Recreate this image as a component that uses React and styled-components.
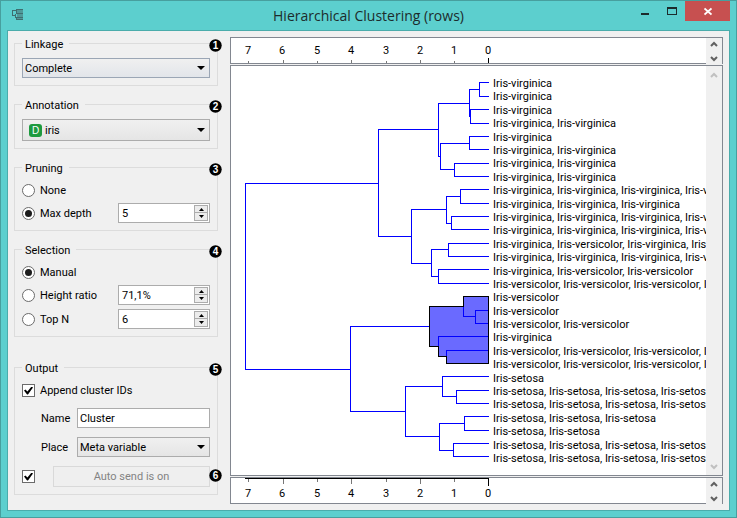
import React, { useState } from "react";
import styled, { createGlobalStyle, css } from "styled-components";

const GlobalStyle = createGlobalStyle`
  *, *::before, *::after { box-sizing: border-box; }
  body { margin: 0; background: #5ccfce; }
  body, button, input, select { font: 11px/13px Roboto, "Liberation Sans", sans-serif; color: #000; }
`;

const Window = styled.div`
  display: flex;
  flex-direction: column;
  min-height: 100vh;
  padding: 0 6px 6px;
  border: 1px solid #479f9e;
  background: #5ccfce;
`;

const TitleBar = styled.header`
  display: grid;
  grid-template-columns: 100px 1fr 100px;
  height: 29px;
`;

const AppIcon = styled.svg`
  width: 12px;
  height: 12px;
  margin: 8px 0 0 5px;
`;

const Title = styled.h1`
  margin: 0;
  color: #1c2c2c;
  font: 14px/29px "Open Sans", "Noto Sans", sans-serif;
  text-align: center;
  white-space: nowrap;
`;

const Controls = styled.div`
  display: flex;
  justify-content: flex-end;
  align-items: flex-start;
`;

const ControlButton = styled.button`
  display: flex;
  width: ${(p) => (p.$close ? 45 : 27)}px;
  height: 20px;
  padding: 0;
  border: 0;
  justify-content: center;
  background: ${(p) => (p.$close ? "#c75050" : "transparent")};
`;

const Client = styled.main`
  display: grid;
  flex: 1;
  grid-template-columns: 204px minmax(0, 1fr);
  gap: 12px;
  padding: 6px;
  border: 1px solid #4aacab;
  background: #f0f0f0;
`;

const Sidebar = styled.form`
  display: flex;
  flex-direction: column;
  gap: 12px;
`;

const GroupBox = styled.fieldset`
  min-width: 0;
  margin: 0;
  padding: 8px 7px 7px;
  border: 1px solid #dcdcdc;
`;

const GroupFrame = styled.div`
  position: relative;
  margin-top: ${(p) => (p.$spaced ? 12 : 0)}px;
`;

const Legend = styled.legend`
  height: 13px;
  padding: 0 6px 0 3px;
  line-height: 15px;
`;

const Stack = styled.div`
  display: flex;
  flex-direction: column;
  gap: ${(p) => p.$gap}px;
`;

const Row = styled.div`
  position: relative;
  display: grid;
  grid-template-columns: ${(p) => p.$columns || "1fr"};
  align-items: center;
  min-height: 17px;
`;

const Badge = styled.svg`
  position: absolute;
  right: ${(p) => (p.$inRow ? -12 : -4)}px;
  top: ${(p) => (p.$inRow ? 3 : 2)}px;
  width: 13px;
  height: 13px;
`;

const SelectFrame = styled.div`
  position: relative;
  display: flex;
  align-items: center;
`;

const Select = styled.select`
  appearance: none;
  width: 100%;
  height: ${(p) => (p.$icon ? 22 : 20)}px;
  padding: 0 20px 0 ${(p) => (p.$icon ? 22 : 2)}px;
  border: 1px solid ${(p) => (p.$focused ? "#9ba6b5" : "#acacac")};
  border-radius: 0;
  background: linear-gradient(#f0f0f0, ${(p) => (p.$focused ? "#e2e5ea" : "#e5e5e5")});
`;

const SelectArrow = styled.svg`
  position: absolute;
  right: 5px;
  width: 8px;
  height: 4px;
  pointer-events: none;
`;

const VariableIcon = styled.span`
  position: absolute;
  left: 7px;
  width: 13px;
  height: 13px;
  border-radius: 3px;
  background: #1e9a3f;
  color: #fff;
  font: 10px/13px "Liberation Sans", sans-serif;
  text-align: center;
  pointer-events: none;
`;

const Choice = styled.label`
  display: flex;
  align-items: center;
  gap: 5px;
`;

const mark = css`
  appearance: none;
  display: grid;
  place-items: center;
  flex: none;
  width: 13px;
  height: 13px;
  margin: 0;
  border: 1px solid #6b6b6b;
  background: #fff;
`;

const Radio = styled.input.attrs({ type: "radio" })`
  ${mark}
  border-radius: 50%;
  &:checked::before {
    content: "";
    width: 7px;
    height: 7px;
    border-radius: 50%;
    background: #1c1c1c;
  }
`;

const CheckBox = styled.input.attrs({ type: "checkbox" })`
  ${mark}
  &:checked::before {
    content: "";
    width: 9px;
    height: 8px;
    background: #000;
    clip-path: polygon(0 50%, 16% 38%, 38% 64%, 84% 0, 100% 12%, 44% 100%, 34% 100%);
  }
`;

const SpinFrame = styled.div`
  display: flex;
  min-width: 0;
  height: 20px;
  padding: 1px;
  border: 1px solid #acacac;
  background: #fff;
`;

const SpinInput = styled.input`
  flex: 1;
  width: 0;
  min-width: 0;
  padding: 1px 3px 0 2px;
  border: 0;
  background: transparent;
`;

const SpinButtons = styled.div`
  display: grid;
  grid-template-rows: 1fr 1fr;
  width: 14px;
`;

const SpinButton = styled.button`
  display: grid;
  place-items: center;
  padding: 0;
  border: 1px solid #acacac;
  background: #ececec;
  & + & { border-top: 0; }
`;

const TextField = styled.input`
  width: 100%;
  min-width: 0;
  height: 20px;
  padding: 1px 2px 0;
  border: 1px solid #acacac;
  background: #fff;
`;

const FieldLabel = styled.label`
  padding-left: 19px;
`;

const SendButton = styled.button`
  height: 21px;
  border: 1px solid #d9d9d9;
  background: #efefef;
  color: #838383;
`;

const Views = styled.section`
  display: grid;
  grid-template-rows: 27px minmax(0, 1fr) 27px;
  gap: 1px;
`;

const Pane = styled.div`
  display: grid;
  grid-template-columns: minmax(0, 1fr) 16px;
  border: 1px solid #828790;
  background: #fff;
`;

const Plot = styled.svg`
  display: block;
  width: 100%;
  height: 100%;
  overflow: hidden;
  shape-rendering: crispEdges;
  text { font: 11px Roboto, "Liberation Sans", sans-serif; }
`;

const ScrollBar = styled.div`
  display: flex;
  flex-direction: column;
  justify-content: space-between;
  background: #f0f0f0;
`;

const ScrollButton = styled.button`
  display: grid;
  place-items: center;
  height: ${(p) => (p.$tall ? 17 : 12)}px;
  padding: 0;
  border: 0;
  background: transparent;
  color: ${(p) => (p.$tall ? "#c0c0c0" : "#606060")};
  & + & {
    height: ${(p) => (p.$tall ? 17 : 13)}px;
    border-top: ${(p) => (p.$divided ? "1px solid #828790" : "0")};
  }
`;

function NumberBadge({ n, inRow }) {
  return (
    <Badge $inRow={inRow} viewBox="0 0 13 13" aria-hidden="true">
      <circle cx="6.5" cy="6.5" r="6.2" />
      <text x="6.5" y="10.2" fill="#fff" fontFamily="Liberation Sans, sans-serif" fontSize="10" fontWeight="700" textAnchor="middle">
        {n}
      </text>
    </Badge>
  );
}

function Group({ title, n, spaced, children }) {
  return (
    <GroupFrame $spaced={spaced}>
      <GroupBox>
        <Legend>{title}</Legend>
        {children}
      </GroupBox>
      <NumberBadge n={n} />
    </GroupFrame>
  );
}

function DropDown({ icon, options, ...rest }) {
  return (
    <SelectFrame>
      <Select $icon={!!icon} {...rest}>
        {options.map((o) => <option key={o}>{o}</option>)}
      </Select>
      {icon && <VariableIcon aria-hidden="true">{icon}</VariableIcon>}
      <SelectArrow viewBox="0 0 8 4"><path d="M0 0h8L4 4z" /></SelectArrow>
    </SelectFrame>
  );
}

function Spin({ label, initial }) {
  const [value, setValue] = useState(initial);
  const step = (d) => {
    const percent = value.endsWith("%");
    const next = parseFloat(value.replace(",", ".")) + d;
    setValue(percent ? `${next.toFixed(1).replace(".", ",")}%` : String(next));
  };
  return (
    <SpinFrame>
      <SpinInput aria-label={label} value={value} onChange={(e) => setValue(e.target.value)} />
      <SpinButtons>
        <SpinButton type="button" aria-label={`Increase ${label}`} onClick={() => step(1)}>
          <svg width="5" height="3"><path d="M0 3h5L2.5 0z" /></svg>
        </SpinButton>
        <SpinButton type="button" aria-label={`Decrease ${label}`} onClick={() => step(-1)}>
          <svg width="5" height="3"><path d="M0 0h5L2.5 3z" /></svg>
        </SpinButton>
      </SpinButtons>
    </SpinFrame>
  );
}

function Scroll({ tall, divided }) {
  return (
    <ScrollBar>
      <ScrollButton type="button" aria-label="Scroll up" $tall={tall}>
        <svg width="8" height="6"><path d="M1 5l3-3 3 3" fill="none" stroke="currentColor" strokeWidth="2" /></svg>
      </ScrollButton>
      <ScrollButton type="button" aria-label="Scroll down" $tall={tall} $divided={divided}>
        <svg width="8" height="6"><path d="M1 1l3 3 3-3" fill="none" stroke="currentColor" strokeWidth="2" /></svg>
      </ScrollButton>
    </ScrollBar>
  );
}

const ticks = [[7, 17], [6, 52], [5, 86], [4, 120], [3, 155], [2, 189], [1, 223], [0, 257]];

function Axis({ bottom }) {
  return (
    <Pane>
      <Plot role="img" aria-label="Height scale">
        {bottom && <path d="M14 .5H258" stroke="#000" />}
        {ticks.map(([n, x]) => (
          <g key={n}>
            <path
              d={bottom ? `M${x + 0.5} 1v${n === 0 ? 7 : n % 2 ? 3 : 5}` : `M${x + 0.5} 25v${n === 0 ? -5 : n % 2 ? -2 : -3}`}
              stroke={n === 0 ? "#000" : "#777"}
            />
            <text x={n === 6 ? x - 1 : x} y={bottom ? 19 : 16} textAnchor="middle">{n}</text>
          </g>
        ))}
      </Plot>
      <Scroll divided={!bottom} />
    </Pane>
  );
}

const vi = "Iris-virginica";
const ve = "Iris-versicolor";
const se = "Iris-setosa";

const leaves = [
  [vi], [vi], [vi], [vi, vi], [vi], [vi, vi], [vi, vi], [vi, vi],
  [vi, vi, vi, vi], [vi, vi, vi], [vi, vi, vi, vi], [vi, vi, vi, vi],
  [vi, ve, vi, vi], [vi, vi, vi, vi], [vi, ve, ve], [ve, ve, ve, ve],
  [ve], [ve], [ve, ve], [vi], [ve, ve, ve, ve], [ve, ve, ve, ve],
  [se], [se, se, se, se], [se, se, se, se], [se, se, se], [se, se],
  [se, se, se, se], [se, se, se, se],
];

const firstBaseline = 21;
const leafPitch = 375 / 28;

// Each merge: height position, first child (x, y), second child (x, y).
const merges = [
  [248, 257, 16, 257, 30], [239, 257, 43, 257, 57], [238, 248, 23, 239, 50],
  [238, 257, 70, 257, 83], [223, 257, 97, 257, 110], [209, 238, 77, 223, 103],
  [207, 238, 37, 209, 90], [229, 257, 123, 257, 137], [220, 257, 150, 257, 163],
  [215, 229, 130, 220, 157], [217, 257, 177, 257, 190], [207, 257, 203, 257, 217],
  [200, 217, 183, 207, 210], [180, 215, 143, 200, 197], [147, 207, 63, 180, 170],
  [244, 257, 244, 257, 257], [232, 257, 230, 244, 250], [215, 257, 284, 257, 297],
  [207, 257, 270, 215, 290], [198, 232, 240, 207, 280], [225, 257, 324, 257, 337],
  [211, 257, 310, 225, 330], [233, 257, 350, 257, 364], [222, 257, 377, 257, 390],
  [208, 233, 357, 222, 384], [174, 211, 320, 208, 370], [119, 198, 260, 174, 345],
  [14, 147, 117, 119, 303],
];

const selection = "M232 230H257V297H215V290H207V280H198V240H232Z";

function Dendrogram() {
  return (
    <Plot role="img" aria-label="Dendrogram of iris rows">
      <g transform="translate(.5 .5)" fill="none">
        <path d={selection} fill="#6a6aff" />
        {merges.map(([x, x1, y1, x2, y2]) => (
          <path key={`${x}-${y1}`} d={`M${x1} ${y1}H${x}V${y2}H${x2}`} stroke="#0000ff" strokeLinecap="square" />
        ))}
        <path d={selection} stroke="#000" />
      </g>
      {leaves.map((names, i) => (
        <text key={i} x="262" y={Math.round(firstBaseline + i * leafPitch)}>{names.join(", ")}</text>
      ))}
    </Plot>
  );
}

export default function App() {
  return (
    <>
      <GlobalStyle />
      <Window>
        <TitleBar>
          <AppIcon viewBox="0 0 12 12" shapeRendering="crispEdges">
            <path d="M5 1h6v9H5z" fill="#4f9a9a" />
            <path d="M4 0h7v1H4zM4 4h7v1H4zM5 8h6v1H5zM5 10h6v1H5zM0 1h4v1H0zM0 2h1v5H0zM1 6h2v1H1zM4 0h1v5H4zM3 5h1v4H3zM4 8h1v3H4z" fill="#3f6e70" />
          </AppIcon>
          <Title>Hierarchical Clustering (rows)</Title>
          <Controls>
            <ControlButton aria-label="Minimize">
              <svg width="10" height="20"><path d="M1 12h8v2H1z" fill="#1c2c2c" /></svg>
            </ControlButton>
            <ControlButton aria-label="Maximize">
              <svg width="10" height="20" shapeRendering="crispEdges">
                <path d="M0 6h10v8H0zM1 8v5h8V8z" fill="#1c2c2c" fillRule="evenodd" />
              </svg>
            </ControlButton>
            <ControlButton aria-label="Close" $close>
              <svg width="8" height="20"><path d="M.5 7.500l7 6M7.500 7.500l-7 6" stroke="#fff" strokeWidth="1.800" /></svg>
            </ControlButton>
          </Controls>
        </TitleBar>
        <Client>
          <Sidebar onSubmit={(e) => e.preventDefault()}>
            <Group title="Linkage" n={1}>
              <DropDown aria-label="Linkage" $focused options={["Complete", "Single", "Average", "Ward"]} />
            </Group>
            <Group title="Annotation" n={2}>
              <DropDown aria-label="Annotation" icon="D" options={["iris"]} />
            </Group>
            <Group title="Pruning" n={3}>
              <Stack $gap={4}>
                <Row><Choice><Radio name="pruning" />None</Choice></Row>
                <Row $columns="96px minmax(0, 1fr)">
                  <Choice><Radio name="pruning" defaultChecked />Max depth</Choice>
                  <Spin label="Max depth" initial="5" />
                </Row>
              </Stack>
            </Group>
            <Group title="Selection" n={4}>
              <Stack $gap={4}>
                <Row><Choice><Radio name="selection" defaultChecked />Manual</Choice></Row>
                <Row $columns="96px minmax(0, 1fr)">
                  <Choice><Radio name="selection" />Height ratio</Choice>
                  <Spin label="Height ratio" initial="71,1%" />
                </Row>
                <Row $columns="96px minmax(0, 1fr)">
                  <Choice><Radio name="selection" />Top N</Choice>
                  <Spin label="Top N" initial="6" />
                </Row>
              </Stack>
            </Group>
            <Group title="Output" n={5} spaced>
              <Stack $gap={9}>
                <Row><Choice><CheckBox defaultChecked />Append cluster IDs</Choice></Row>
                <Row $columns="55px minmax(0, 1fr)">
                  <FieldLabel htmlFor="name">Name</FieldLabel>
                  <TextField id="name" defaultValue="Cluster" />
                </Row>
                <Row $columns="55px minmax(0, 1fr)">
                  <FieldLabel htmlFor="place">Place</FieldLabel>
                  <DropDown id="place" options={["Meta variable", "Class variable", "Attribute"]} />
                </Row>
                <Row $columns="31px minmax(0, 1fr)">
                  <CheckBox aria-label="Send automatically" defaultChecked />
                  <SendButton type="button" disabled>Auto send is on</SendButton>
                  <NumberBadge n={6} inRow />
                </Row>
              </Stack>
            </Group>
          </Sidebar>
          <Views>
            <Axis />
            <Pane>
              <Dendrogram />
              <Scroll tall />
            </Pane>
            <Axis bottom />
          </Views>
        </Client>
      </Window>
    </>
  );
}
